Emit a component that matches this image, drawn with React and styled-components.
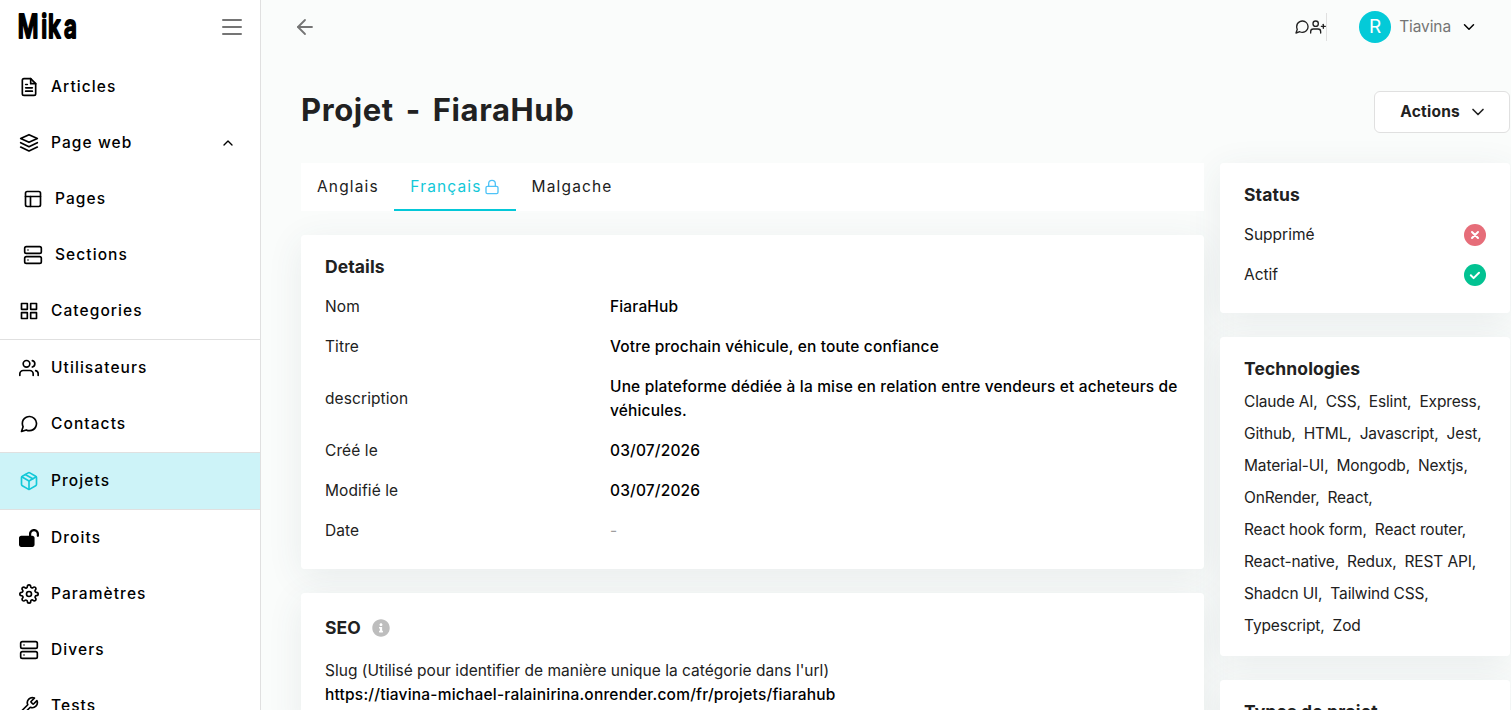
import React from "react";
import styled, { createGlobalStyle } from "styled-components";
import {
  FiArrowLeft,
  FiChevronDown,
  FiChevronUp,
  FiFileText,
  FiGrid,
  FiLayout,
  FiLock,
  FiMessageCircle,
  FiPackage,
  FiServer,
  FiSettings,
  FiUserPlus,
  FiUsers,
} from "react-icons/fi";
import { FaInfoCircle } from "react-icons/fa";
import { FaLockOpen } from "react-icons/fa6";
import { LuWrench } from "react-icons/lu";

const technologies = [
  "Claude AI",
  "CSS",
  "Eslint",
  "Express",
  "Github",
  "HTML",
  "Javascript",
  "Jest",
  "Material-UI",
  "Mongodb",
  "Nextjs",
  "OnRender",
  "React",
  "React hook form",
  "React router",
  "React-native",
  "Redux",
  "REST API",
  "Shadcn UI",
  "Tailwind CSS",
  "Typescript",
  "Zod",
];

const details = [
  { label: "Nom", value: "FiaraHub" },
  { label: "Titre", value: "Votre prochain véhicule, en toute confiance" },
  {
    label: "description",
    value:
      "Une plateforme dédiée à la mise en relation entre vendeurs et acheteurs de véhicules.",
  },
  { label: "Créé le", value: "03/07/2026" },
  { label: "Modifié le", value: "03/07/2026" },
  { label: "Date", value: "-", empty: true },
];

function StackIcon() {
  return (
    <svg
      width="20"
      height="20"
      viewBox="0 0 24 24"
      fill="none"
      stroke="currentColor"
      strokeWidth="2"
      strokeLinejoin="round"
      strokeLinecap="round"
    >
      <path d="M12 2 2 6.6l10 4.6 10-4.6z" />
      <path d="m2 11.6 10 4.8 10-4.8" />
      <path d="m2 16.8 10 4.8 10-4.8" />
    </svg>
  );
}

function MenuIcon() {
  return (
    <svg
      width="20"
      height="16"
      viewBox="0 0 20 16"
      stroke="#757575"
      strokeWidth="2"
      strokeLinecap="round"
    >
      <path d="M1 1h18M1 8h18M1 15h18" />
    </svg>
  );
}

function NavLink({ icon, label, sub, active, open }) {
  return (
    <NavItem $sub={sub} $active={active}>
      <NavIcon $active={active}>{icon}</NavIcon>
      <NavLabel>{label}</NavLabel>
      {open && <FiChevronUp size={16} />}
    </NavItem>
  );
}

function Panel({ title, info, children }) {
  return (
    <Card>
      <CardBody>
        <CardTitle $info={info}>
          {title}
          {info && <FaInfoCircle size={18} color="#bdbdbd" />}
        </CardTitle>
        {children}
      </CardBody>
    </Card>
  );
}

export default function App() {
  return (
    <>
      <GlobalStyle />
      <Layout>
        <Sidebar>
          <SidebarHeader>
            <Logo width="64" height="44" viewBox="0 0 64 44">
              <text transform="scale(0.68 1)" x="1 35.5 45.5 69" y="33">
                Mika
              </text>
            </Logo>
            <MenuIcon />
          </SidebarHeader>
          <nav>
            <NavGroup>
              <NavLink icon={<FiFileText />} label="Articles" />
              <NavLink icon={<StackIcon />} label="Page web" open />
              <NavLink icon={<FiLayout />} label="Pages" sub />
              <NavLink icon={<FiServer />} label="Sections" sub />
              <NavLink icon={<FiGrid />} label="Categories" />
            </NavGroup>
            <NavGroup>
              <NavLink icon={<FiUsers />} label="Utilisateurs" />
              <NavLink icon={<FiMessageCircle />} label="Contacts" />
            </NavGroup>
            <NavGroup>
              <NavLink icon={<FiPackage />} label="Projets" active />
            </NavGroup>
            <NavGroup>
              <NavLink icon={<FaLockOpen />} label="Droits" />
              <NavLink icon={<FiSettings />} label="Paramètres" />
              <NavLink icon={<FiServer />} label="Divers" />
              <NavLink icon={<LuWrench />} label="Tests" />
            </NavGroup>
          </nav>
        </Sidebar>

        <Main>
          <Header>
            <FiArrowLeft size={24} color="#757575" strokeWidth={1.8} />
            <HeaderRight>
              <QuickActions>
                <FiMessageCircle size={16} />
                <FiUserPlus size={16} />
              </QuickActions>
              <Profile>
                <Avatar>R</Avatar>
                <UserName>Tiavina</UserName>
                <FiChevronDown size={18} />
              </Profile>
            </HeaderRight>
          </Header>

          <TitleRow>
            <Title>Projet - FiaraHub</Title>
            <ActionsButton>
              Actions
              <FiChevronDown size={20} />
            </ActionsButton>
          </TitleRow>

          <Columns>
            <LeftColumn>
              <Tabs>
                <Tab>Anglais</Tab>
                <Tab $active>
                  Français
                  <FiLock size={16} color="#4fc3f7" />
                </Tab>
                <Tab>Malgache</Tab>
              </Tabs>
              <Panel title="Details">
                <Rows>
                  {details.map((row) => (
                    <DetailRow key={row.label}>
                      <Label>{row.label}</Label>
                      <Value $empty={row.empty}>{row.value}</Value>
                    </DetailRow>
                  ))}
                </Rows>
              </Panel>
              <Panel title="SEO" info>
                <Seo>
                  <Slug>
                    Slug (Utilisé pour identifier de manière unique la catégorie
                    dans l'url)
                  </Slug>
                  <Url>
                    https://tiavina-michael-ralainirina.onrender.com/fr/projets/fiarahub
                  </Url>
                </Seo>
              </Panel>
            </LeftColumn>

            <RightColumn>
              <Panel title="Status">
                <Rows>
                  <StatusRow>
                    Supprimé
                    <StatusDot $color="#e66d79">
                      <path d="m8 8 6 6m0-6-6 6" />
                    </StatusDot>
                  </StatusRow>
                  <StatusRow>
                    Actif
                    <StatusDot $color="#02c292">
                      <path d="m6.8 11.3 2.8 2.8 5.4-5.4" />
                    </StatusDot>
                  </StatusRow>
                </Rows>
              </Panel>
              <Panel title="Technologies">
                <TechList>
                  {technologies.map((name, i) => (
                    <li key={name}>
                      {name}
                      {i < technologies.length - 1 && ","}
                    </li>
                  ))}
                </TechList>
              </Panel>
              <Panel title="Types de projet">
                <Rows />
              </Panel>
            </RightColumn>
          </Columns>
        </Main>
      </Layout>
    </>
  );
}

const GlobalStyle = createGlobalStyle`
  * {
    box-sizing: border-box;
  }
  body {
    margin: 0;
    overflow: hidden;
    background-color: #fafcfb;
    color: #212121;
    font-family: "Inter", "Liberation Sans", sans-serif;
    font-size: 15.5px;
    line-height: 24px;
  }
  svg {
    flex-shrink: 0;
  }
`;

const Layout = styled.div`
  display: flex;
  height: 710px;
  overflow: hidden;
`;

// Sidebar
const Sidebar = styled.aside`
  flex: 0 0 261px;
  background-color: #fff;
  border-right: 1px solid #e0e0e0;
`;

const SidebarHeader = styled.div`
  display: flex;
  align-items: center;
  justify-content: space-between;
  height: 59px;
  padding: 0 18px 5px 17px;
`;

const Logo = styled.svg`
  overflow: visible;
  font-family: "Inter", sans-serif;
  font-size: 33px;
  font-weight: 600;
  fill: #000;
  stroke: #000;
  stroke-width: 2px;
  stroke-linejoin: round;
`;

const NavGroup = styled.div`
  & + & {
    border-top: 1px solid #e0e0e0;
  }
`;

const NavItem = styled.a`
  display: flex;
  align-items: center;
  gap: 12px;
  height: 56px;
  padding: 0 24px 0 ${(props) => (props.$sub ? "23px" : "19px")};
  background-color: ${(props) => (props.$active ? "#cdf3f8" : "transparent")};
  color: #000;
`;

const NavIcon = styled.span`
  display: flex;
  font-size: 20px;
  color: ${(props) => (props.$active ? "#12c8d8" : "#000")};
`;

const NavLabel = styled.span`
  flex: 1;
  font-weight: 500;
  letter-spacing: 1.08px;
`;

// Main area
const Main = styled.main`
  flex: 1;
  min-width: 0;
  padding-right: 1px;
`;

const Header = styled.header`
  display: flex;
  align-items: center;
  justify-content: space-between;
  height: 54px;
  padding: 0 32px;
`;

const HeaderRight = styled.div`
  display: flex;
  align-items: center;
  gap: 32px;
`;

const QuickActions = styled.div`
  display: flex;
  align-items: center;
  height: 28px;
  border-right: 1px solid #e0e0e0;
`;

const Profile = styled.div`
  display: flex;
  align-items: center;
  color: #000;
`;

const Avatar = styled.div`
  width: 32px;
  height: 32px;
  border-radius: 50%;
  background-color: #04cad8;
  color: #fff;
  font-size: 19px;
  line-height: 32px;
  text-align: center;
`;

const UserName = styled.span`
  margin: 0 9px 0 8px;
  color: #757575;
  letter-spacing: -0.1px;
`;

const TitleRow = styled.div`
  display: flex;
  align-items: flex-start;
  justify-content: space-between;
  height: 109px;
  padding: 37px 0 0 40px;
`;

const Title = styled.h1`
  margin: 0;
  font-size: 31px;
  font-weight: 700;
  line-height: 38px;
  letter-spacing: 0.6px;
  word-spacing: 4px;
`;

const ActionsButton = styled.button`
  display: flex;
  align-items: center;
  gap: 8px;
  height: 42px;
  padding: 0 21px 0 25px;
  border: 1px solid #e0e0e0;
  border-radius: 6px;
  background-color: #fff;
  color: #212121;
  font: inherit;
  font-weight: 700;
  letter-spacing: 0.25px;
`;

const Columns = styled.div`
  display: grid;
  grid-template-columns: 903px 290px;
  gap: 16px;
  align-items: start;
  padding-left: 40px;
`;

const LeftColumn = styled.div`
  display: flex;
  flex-direction: column;
  gap: 24px;
`;

const RightColumn = styled.div`
  display: flex;
  flex-direction: column;
  gap: 24px;
`;

const Tabs = styled.div`
  position: relative;
  display: flex;
  height: 48px;
  background-color: #fff;
`;

const Tab = styled.div`
  display: flex;
  align-items: center;
  gap: 2.5px;
  padding: 2px 15.5px 0 16px;
  border-bottom: 2px solid
    ${(props) => (props.$active ? "#04c8d8" : "transparent")};
  color: ${(props) => (props.$active ? "#12c8d8" : "#212121")};
  letter-spacing: 1.15px;
`;

// The body sits above the shadows of the neighbouring cards
const Card = styled.section`
  border-radius: 4px;
  box-shadow: 0 8px 36px rgba(60, 80, 90, 0.09);
`;

const CardBody = styled.div`
  position: relative;
  padding: 20px 24px 0;
  border-radius: 4px;
  background-color: #fff;
`;

const CardTitle = styled.h2`
  display: flex;
  align-items: center;
  gap: 11px;
  margin: 0;
  padding-top: ${(props) => (props.$info ? "3px" : "0")};
  font-size: 17.5px;
  font-weight: 700;
  letter-spacing: 0.1px;
`;

const Rows = styled.div`
  display: flex;
  flex-direction: column;
  gap: 16px;
  padding: 16px 0 26px;
`;

const DetailRow = styled.div`
  display: grid;
  grid-template-columns: 285px 1fr;
  align-items: center;
`;

const Label = styled.span`
  letter-spacing: 0.1px;
`;

const Value = styled.span`
  color: ${(props) => (props.$empty ? "#9e9e9e" : "#000")};
  font-weight: ${(props) => (props.$empty ? 400 : 500)};
  letter-spacing: 0.16px;
`;

const Seo = styled.div`
  padding: 19px 0 24px;
`;

const Slug = styled.div`
  letter-spacing: 0.02px;
`;

const Url = styled.div`
  color: #000;
  font-weight: 500;
  letter-spacing: 0.21px;
`;

const StatusRow = styled.div`
  display: flex;
  align-items: center;
  justify-content: space-between;
`;

const StatusDot = styled.svg.attrs({
  width: 22,
  height: 22,
  viewBox: "0 0 22 22",
})`
  border-radius: 50%;
  background-color: ${(props) => props.$color};
  fill: none;
  stroke: #fff;
  stroke-width: 2px;
  stroke-linecap: round;
  stroke-linejoin: round;
`;

const TechList = styled.ul`
  display: flex;
  flex-wrap: wrap;
  column-gap: 8px;
  margin: 0;
  padding: 5px 0 14px;
  list-style: none;
  line-height: 32px;
  letter-spacing: -0.15px;
`;
